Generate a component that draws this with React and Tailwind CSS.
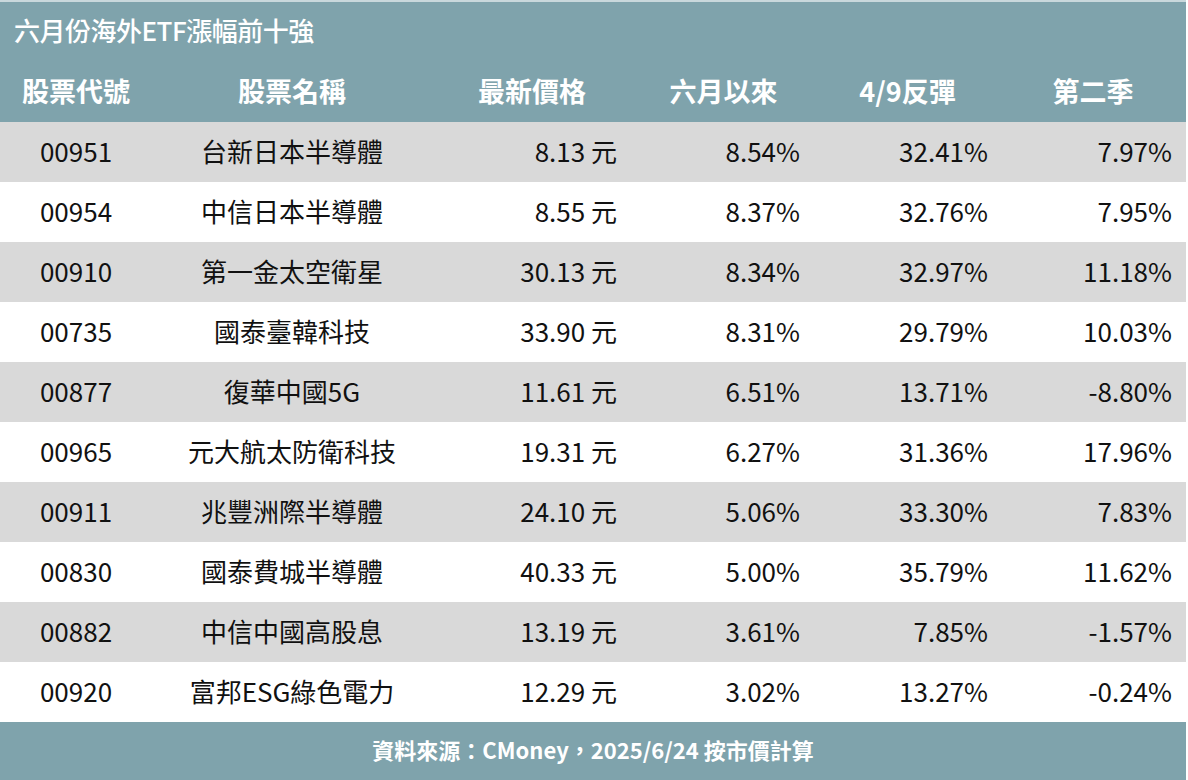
const rows = [
  ["00951", "台新日本半導體", "8.13", "8.54%", "32.41%", "7.97%"],
  ["00954", "中信日本半導體", "8.55", "8.37%", "32.76%", "7.95%"],
  ["00910", "第一金太空衛星", "30.13", "8.34%", "32.97%", "11.18%"],
  ["00735", "國泰臺韓科技", "33.90", "8.31%", "29.79%", "10.03%"],
  ["00877", "復華中國5G", "11.61", "6.51%", "13.71%", "-8.80%"],
  ["00965", "元大航太防衛科技", "19.31", "6.27%", "31.36%", "17.96%"],
  ["00911", "兆豐洲際半導體", "24.10", "5.06%", "33.30%", "7.83%"],
  ["00830", "國泰費城半導體", "40.33", "5.00%", "35.79%", "11.62%"],
  ["00882", "中信中國高股息", "13.19", "3.61%", "7.85%", "-1.57%"],
  ["00920", "富邦ESG綠色電力", "12.29", "3.02%", "13.27%", "-0.24%"],
];

const font = { fontFamily: '"Noto Sans CJK TC", "Noto Sans", sans-serif' };
const cols = "grid grid-cols-[152px_280px_200px_183px_185px_186px]";

export default function App() {
  return (
    <div className="w-[1188px] h-[780px] bg-white" style={font}>
      <div className="w-[1186px] h-[780px] flex flex-col">
        <div className="h-[2px] bg-[#c9d8dc]" />
        <div className="h-[120px] bg-[#7fa3ac] flex flex-col text-white">
          <div className="h-[60px] flex items-center pl-[14px] pb-[5px] text-[26px] font-medium tracking-[-0.5px]">
            六月份海外ETF漲幅前十強
          </div>
          <div className={`${cols} h-[60px] items-center pb-[2px] text-[27px] font-bold`}>
            <div className="text-center">股票代號</div>
            <div className="text-center">股票名稱</div>
            <div className="text-center">最新價格</div>
            <div className="text-center">六月以來</div>
            <div className="text-center">4/9反彈</div>
            <div className="text-center">第二季</div>
          </div>
        </div>
        {rows.map((r, i) => (
          <div
            key={r[0]}
            className={`${cols} h-[60px] items-center pb-[3px] text-[26px] text-[#111] ${i % 2 === 0 ? "bg-[#d9d9d9]" : "bg-white"}`}
          >
            <div className="text-center">{r[0]}</div>
            <div className="text-center">{r[1]}</div>
            <div className="text-right pr-[15px]">{r[2]} 元</div>
            <div className="text-right pr-[15px]">{r[3]}</div>
            <div className="text-right pr-[12px]">{r[4]}</div>
            <div className="text-right pr-[14px]">{r[5]}</div>
          </div>
        ))}
        <div className="flex-1 bg-[#7fa3ac] flex items-center justify-center pb-[3px] text-white text-[22px] font-semibold">
          資料來源：CMoney，2025/6/24 按市價計算
        </div>
      </div>
    </div>
  );
}
